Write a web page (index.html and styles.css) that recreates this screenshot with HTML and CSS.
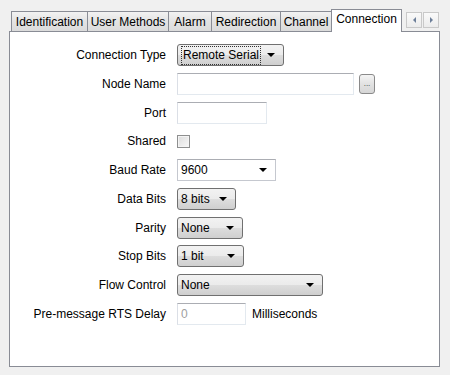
FILE: index.html
```html
<!DOCTYPE html>
<html lang="en">

<head>
  <meta charset="UTF-8" />
  <title>Connection</title>
  <link rel="stylesheet" href="styles.css">
</head>

<body>
  <div class="dialog">
    <div class="tabs">
      <span class="tab t1">Identification</span>
      <span class="tab t2">User Methods</span>
      <span class="tab t3">Alarm</span>
      <span class="tab t4">Redirection</span>
      <span class="tab t5">Channel</span>
      <span class="tab t6 current">Connection</span>
      <div class="scroll">
        <span class="sbtn"><i class="tri left"></i></span>
        <span class="sbtn"><i class="tri right"></i></span>
      </div>
    </div>
    <div class="panel">
      <div class="form">
        <label>Connection Type</label>
        <div class="row"><div class="select w107"><span class="focus">Remote Serial</span><i class="arrow"></i></div></div>

        <label>Node Name</label>
        <div class="row"><input class="text w177" type="text" /><span class="dots">...</span></div>

        <label>Port</label>
        <div class="row"><input class="text w90" type="text" /></div>

        <label>Shared</label>
        <div class="row"><span class="check"></span></div>

        <label>Baud Rate</label>
        <div class="row"><div class="combo w99"><span>9600</span><i class="arrow"></i></div></div>

        <label>Data Bits</label>
        <div class="row"><div class="select w59"><span>8 bits</span><i class="arrow"></i></div></div>

        <label>Parity</label>
        <div class="row"><div class="select w66"><span>None</span><i class="arrow"></i></div></div>

        <label>Stop Bits</label>
        <div class="row"><div class="select w67"><span>1 bit</span><i class="arrow"></i></div></div>

        <label>Flow Control</label>
        <div class="row"><div class="select w146"><span>None</span><i class="arrow"></i></div></div>

        <label>Pre-message RTS Delay</label>
        <div class="row"><input class="text w69 grey" type="text" value="0" /><span class="unit">Milliseconds</span></div>
      </div>
    </div>
  </div>
</body>

</html>
```

FILE: styles.css
```css
* {
  margin: 0;
  padding: 0;
  box-sizing: border-box;
}

body {
  background-color: #f0f0f0;
  font-family: "Liberation Sans", Arial, sans-serif;
  font-size: 12px;
  color: #000;
  padding: 9px 0 0 9px;
}

.dialog {
  width: 431px;
}

/* tab strip */
.tabs {
  display: flex;
  align-items: flex-end;
  height: 22px;
  padding-left: 2px;
  position: relative;
  z-index: 1;
}

.tab {
  height: 20px;
  margin-right: -1px;
  border: 1px solid #898c95;
  border-bottom: none;
  background: linear-gradient(#f2f2f2, #e3e3e3 50%, #dbdbdb);
  text-align: center;
  line-height: 20px;
  white-space: nowrap;
}

.t1 { width: 77px; }
.t2 { width: 82px; }
.t3 { width: 44px; }
.t4 { width: 70px; }
.t5 { width: 52px; }

.tab.current {
  width: 71px;
  height: 23px;
  margin-bottom: -1px;
  background: #fff;
  line-height: 19px;
}

.scroll {
  display: flex;
  margin-left: auto;
  margin-right: 1px;
  margin-bottom: 3px;
  gap: 1px;
}

.sbtn {
  width: 16px;
  height: 16px;
  border: 1px solid #c9c9c9;
  background: linear-gradient(#fafafa, #ececec);
  display: flex;
  align-items: center;
  justify-content: center;
}

.tri {
  width: 0;
  height: 0;
  border-top: 3px solid transparent;
  border-bottom: 3px solid transparent;
}

.tri.left {
  border-right: 3px solid #6d7f99;
}

.tri.right {
  border-left: 3px solid #6d7f99;
}

/* page area */
.panel {
  height: 336px;
  border: 1px solid #898c95;
  background-color: #fff;
}

.form {
  display: grid;
  grid-template-columns: 156px 1fr;
  grid-auto-rows: 22px;
  column-gap: 11px;
  row-gap: 6.75px;
  padding-top: 12px;
}

.form label {
  text-align: right;
  line-height: 22px;
  white-space: nowrap;
}

.row {
  display: flex;
  align-items: center;
}

.select,
.combo {
  height: 22px;
  display: flex;
  align-items: center;
  justify-content: space-between;
  padding: 0 8px 0 3px;
}

.select {
  border: 1px solid #707070;
  border-radius: 3px;
  background: linear-gradient(#f2f2f2, #ebebeb 50%, #dddddd 51%, #cfcfcf);
}

.combo {
  border: 1px solid #c5c8cf;
  border-top-color: #abadb3;
  background-color: #fff;
}

.focus {
  border: 1px dotted #333;
  padding: 1px 1px;
  line-height: 15px;
}

.arrow {
  width: 0;
  height: 0;
  border-left: 4px solid transparent;
  border-right: 4px solid transparent;
  border-top: 4px solid #000;
}

.text {
  height: 22px;
  border: 1px solid #e3e9ef;
  border-top-color: #abadb3;
  border-left-color: #dbdfe6;
  background-color: #fff;
  font-family: "Liberation Sans", Arial, sans-serif;
  font-size: 12px;
  padding: 0 3px;
  outline: none;
}

.text.grey {
  color: #a0a0a0;
}

.dots {
  width: 16px;
  height: 20px;
  margin-left: 5px;
  border: 1px solid #8a8a8a;
  border-radius: 3px;
  background: linear-gradient(#f4f4f4, #e2e2e2 50%, #d6d6d6);
  font-size: 8px;
  line-height: 18px;
  text-align: center;
  color: #333;
}

.check {
  width: 13px;
  height: 13px;
  border: 1px solid #8e8f8f;
  background: linear-gradient(135deg, #dcdcdc, #f8f8f8);
  box-shadow: inset 0 0 0 1px #f4f4f4;
}

.unit {
  margin-left: 6px;
}

.w107 { width: 107px; }
.w177 { width: 177px; }
.w90 { width: 90px; }
.w99 { width: 99px; }
.w59 { width: 59px; }
.w66 { width: 66px; }
.w67 { width: 67px; }
.w146 { width: 146px; }
.w69 { width: 69px; }
```
